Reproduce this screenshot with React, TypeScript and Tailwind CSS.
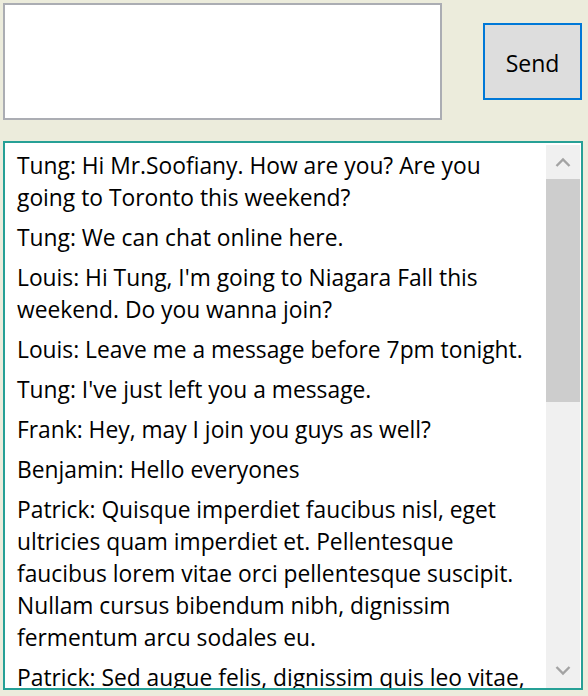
import React from "react";

const messages: string[][] = [
  ["Tung: Hi Mr.Soofiany. How are you? Are you", "going to Toronto this weekend?"],
  ["Tung: We can chat online here."],
  ["Louis: Hi Tung, I'm going to Niagara Fall this", "weekend. Do you wanna join?"],
  ["Louis: Leave me a message before 7pm tonight."],
  ["Tung: I've just left you a message."],
  ["Frank: Hey, may I join you guys as well?"],
  ["Benjamin: Hello everyones"],
  [
    "Patrick: Quisque imperdiet faucibus nisl, eget",
    "ultricies quam imperdiet et. Pellentesque",
    "faucibus lorem vitae orci pellentesque suscipit.",
    "Nullam cursus bibendum nibh, dignissim",
    "fermentum arcu sodales eu.",
  ],
  ["Patrick: Sed augue felis, dignissim quis leo vitae,"],
];

const Chevron = ({ up }: { up?: boolean }) => (
  <svg width="16" height="10" viewBox="0 0 16 10">
    <path
      d={up ? "M1.5 9 L8 2.5 L14.5 9" : "M1.5 1 L8 7.5 L14.5 1"}
      fill="none"
      stroke="#a3a3a3"
      strokeWidth="2.4"
    />
  </svg>
);

export default function App() {
  return (
    <div
      className="w-[588px] h-[696px] overflow-hidden bg-[#ececdc] text-black"
      style={{ fontFamily: '"Open Sans", "Noto Sans", sans-serif' }}
    >
      <div className="flex items-start pt-[3px] pl-[3px]">
        <div className="w-[439px] h-[117px] border-2 border-[#abadb3] bg-white" />
        <button className="ml-[41px] mt-[20px] w-[99px] h-[77px] pt-[3px] border-2 border-[#0078d7] bg-[#dddddd] text-[23px] leading-none">
          Send
        </button>
      </div>

      <div className="mt-[21px] ml-[3px] w-[580px] h-[549px] border-2 border-[#26a096] bg-white flex overflow-hidden">
        <div className="flex-1 overflow-hidden pt-[3px]">
          {messages.map((lines, i) => (
            <div key={i} className="pl-[12px] py-[4px] text-[22.8px] leading-[32px] whitespace-nowrap">
              {lines.map((l, j) => (
                <div key={j}>{l}</div>
              ))}
            </div>
          ))}
        </div>
        <div className="w-[34px] mt-[2px] mr-[1px] flex flex-col bg-[#f0f0f0]">
          <div className="h-[34px] flex items-center justify-center">
            <Chevron up />
          </div>
          <div className="h-[223px] bg-[#cdcdcd]" />
          <div className="flex-1" />
          <div className="h-[34px] flex items-center justify-center">
            <Chevron />
          </div>
        </div>
      </div>
    </div>
  );
}
